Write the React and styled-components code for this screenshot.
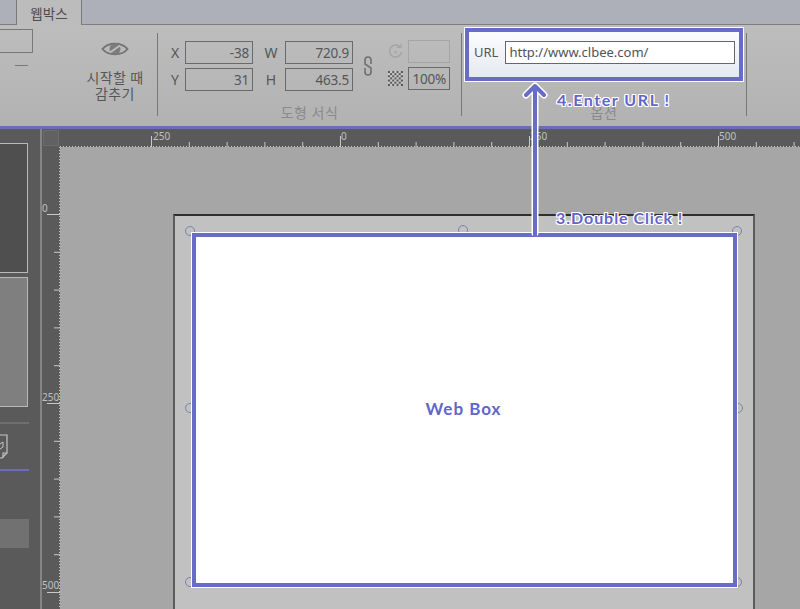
import React from "react";
import styled, { createGlobalStyle } from "styled-components";

const GlobalStyle = createGlobalStyle`
  html, body {
    margin: 0;
    padding: 0;
    background: #5a5a5a;
  }
  * {
    box-sizing: border-box;
  }
`;

const Screen = styled.div`
  position: relative;
  width: 800px;
  height: 609px;
  overflow: hidden;
  display: flex;
  flex-direction: column;
  font-family: "Noto Sans", "Noto Sans CJK KR", sans-serif;
  color: #565656;
`;

const TabBar = styled.div`
  height: 25px;
  flex: none;
  display: flex;
  padding-left: 16px;
  background: #adb0b8;
  border-bottom: 1px solid #7e7e80;
`;

const Tab = styled.div`
  width: 66px;
  height: 25px;
  display: flex;
  align-items: center;
  justify-content: center;
  font-size: 13.5px;
  color: #4c4c4c;
  background: #bcbcbd;
  border-left: 1px solid #77797d;
  border-right: 1px solid #77797d;
`;

const Ribbon = styled.div`
  height: 101px;
  flex: none;
  display: flex;
  background: linear-gradient(#bdbdbd, #b2b2b3);
`;

const Group = styled.div`
  width: ${(p) => p.$width}px;
  flex: none;
  display: flex;
  flex-direction: column;
  position: relative;
`;

const GroupBody = styled.div`
  flex: 1;
  display: flex;
`;

const Caption = styled.div`
  height: 18px;
  margin-bottom: 4px;
  text-align: center;
  font-size: 14px;
  line-height: 18px;
  letter-spacing: 0.5px;
  color: #8a8a8b;
`;

const Separator = styled.div`
  width: 1px;
  flex: none;
  margin: 8px 0 10px;
  background: #77787a;
`;

const StubColumn = styled.div`
  width: 33px;
  flex: none;
  display: flex;
  flex-direction: column;
  align-items: flex-end;
  padding-top: 4px;
`;

const StubBox = styled.div`
  width: 33px;
  height: 24px;
  border: 1px solid #77787a;
  border-left: none;
`;

const StubDash = styled.div`
  width: 13px;
  height: 1px;
  margin: 12px 5px 0 0;
  background: #77787a;
`;

const HideButton = styled.div`
  width: 70px;
  margin-left: 47px;
  padding-top: 14px;
  display: flex;
  flex-direction: column;
  align-items: center;
`;

const HideLabel = styled.div`
  margin-top: 11px;
  font-size: 14px;
  line-height: 16px;
  text-align: center;
  letter-spacing: 0.4px;
  white-space: nowrap;
`;

const FieldGrid = styled.div`
  margin: 16px 0 0 7px;
  display: grid;
  grid-template-columns: 20px 68px 32px 68px;
  grid-auto-rows: 23px;
  row-gap: 4px;
  align-items: center;
`;

const FieldLabel = styled.div`
  font-size: 14px;
  text-align: center;
  padding-left: ${(p) => (p.$wide ? 4 : 0)}px;
`;

const ValueBox = styled.div`
  width: ${(p) => (p.$fill ? "100%" : "auto")};
  height: 23px;
  display: flex;
  align-items: center;
  justify-content: flex-end;
  padding-right: 3px;
  font-size: 13.5px;
  letter-spacing: -0.2px;
  color: ${(p) => (p.$muted ? "#a5a5a6" : "#565656")};
  border: 1px solid ${(p) => (p.$muted ? "#a4a5a6" : "#686a6c")};
`;

const LinkIcon = styled.div`
  width: 14px;
  margin: 31px 0 0 8px;
`;

const ExtraColumn = styled.div`
  margin: 15px 0 0 11px;
  display: grid;
  grid-template-columns: 18px 42px;
  grid-auto-rows: 23px;
  column-gap: 4px;
  row-gap: 4px;
  align-items: center;
  justify-items: center;
`;

const Highlight = styled.div`
  width: 278px;
  height: 53px;
  margin: 3px 0 0 3px;
  display: flex;
  align-items: center;
  gap: 7px;
  padding: 0 0 5px 5px;
  background: linear-gradient(#fbfcfd, #e6e9f1);
  border: 4px solid #676cc8;
  outline: 1px solid #fff;
`;

const UrlLabel = styled.div`
  font-size: 13px;
  color: #555;
`;

const UrlInput = styled.div`
  width: 230px;
  height: 23px;
  display: flex;
  align-items: center;
  padding-left: 3px;
  font-size: 13px;
  color: #50525a;
  background: #fff;
  border: 1px solid #66676a;
`;

const AccentLine = styled.div`
  height: 3px;
  flex: none;
  background: #6a6eb6;
`;

const Workspace = styled.div`
  flex: 1;
  min-height: 0;
  display: flex;
  background: #5a5a5a;
`;

const SidePanel = styled.div`
  width: 42px;
  flex: none;
  display: flex;
  flex-direction: column;
  padding-top: 14px;
  border-right: 2px solid #858585;
`;

const Thumb = styled.div`
  width: 28px;
  height: 130px;
  margin-bottom: 4px;
  background: ${(p) => (p.$active ? "#7f7f7f" : "#4f4f4f")};
  border: 1px solid #b9b9b9;
  border-left: none;
`;

const PanelRule = styled.div`
  width: 29px;
  height: ${(p) => p.$size}px;
  margin-top: ${(p) => p.$gap}px;
  background: ${(p) => p.$color};
`;

const PanelIcon = styled.div`
  height: 26px;
  margin-top: 10px;
`;

const PanelBlock = styled.div`
  width: 29px;
  height: 29px;
  margin-top: 48px;
  background: #717171;
`;

const Stage = styled.div`
  flex: 1;
  min-width: 0;
  display: flex;
  flex-direction: column;
`;

const TopRuler = styled.div`
  height: 18px;
  flex: none;
  position: relative;
`;

const RulerCorner = styled.div`
  position: absolute;
  left: 1px;
  top: 1px;
  width: 16px;
  height: 16px;
  background: #616161;
  border: 1px solid #6c6c6c;
`;

const StageRow = styled.div`
  flex: 1;
  min-height: 0;
  display: flex;
`;

const SideRuler = styled.div`
  width: 18px;
  flex: none;
`;

const Canvas = styled.div`
  flex: 1;
  min-width: 0;
  padding: 67px 0 0 113px;
  background: #a6a6a6;
`;

const Page = styled.div`
  width: 582px;
  height: 420px;
  padding: 17px 0 0 17px;
  background: #c1c1c1;
  border: 2px solid #5c5c5c;
  border-top-color: #2f2f2f;
`;

const Selection = styled.div`
  position: relative;
  width: 545px;
  height: 354px;
`;

const Handle = styled.div`
  position: absolute;
  left: ${(p) => p.$x}%;
  top: ${(p) => p.$y}%;
  width: 10px;
  height: 10px;
  margin: -6px 0 0 -5px;
  border-radius: 50%;
  border: 1px solid #7d80b0;
  background: #c1c1c1;
`;

const WebBox = styled.div`
  position: relative;
  height: 100%;
  display: flex;
  align-items: center;
  justify-content: center;
  padding: 0 2px 3px 0;
  background: #fff;
  border: 4px solid #676cc8;
  outline: 1px solid #fff;
`;

const HandText = styled.div`
  font-family: "Lato", "Noto Sans", sans-serif;
  font-weight: 700;
  font-size: 17px;
  letter-spacing: 1px;
  color: #5f67c8;
  white-space: nowrap;
`;

const Callout = styled(HandText)`
  position: absolute;
  left: ${(p) => p.$x}px;
  top: ${(p) => p.$y}px;
  font-size: 16px;
  letter-spacing: ${(p) => p.$spacing}px;
  line-height: 20px;
  text-shadow: 1px 0 #fff, -1px 0 #fff, 0 1px #fff, 0 -1px #fff, 1px 1px #fff,
    -1px -1px #fff, 1px -1px #fff, -1px 1px #fff;
`;

const ArrowLayer = styled.svg`
  position: absolute;
  left: 515px;
  top: 78px;
`;

const range = (from, to, step) => {
  const out = [];
  for (let v = from; v <= to; v += step) out.push(v);
  return out;
};

const EyeIcon = () => (
  <svg width="28" height="20" viewBox="0 0 28 20">
    <path
      d="M1.5 10 C7 3 21 3 26.5 10 C21 17 7 17 1.5 10 Z"
      fill="none"
      stroke="#757575"
      strokeWidth="2"
    />
    <circle cx="14" cy="10" r="5.5" fill="#7c7c7c" />
    <path d="M9 13.5 L19 6.5" stroke="#bcbcbc" strokeWidth="2" />
  </svg>
);

const ChainIcon = () => (
  <svg width="14" height="20" viewBox="0 0 14 20">
    <path
      d="M10 8 V4 A3 3 0 0 0 4 4 V8 L10 12 V16 A3 3 0 0 1 4 16 V12"
      fill="none"
      stroke="#707070"
      strokeWidth="1.6"
    />
  </svg>
);

const RefreshIcon = () => (
  <svg width="15" height="15" viewBox="0 0 15 15">
    <path
      d="M12 3 A6 6 0 1 0 13.5 8"
      fill="none"
      stroke="#a4a4a5"
      strokeWidth="1.5"
    />
    <path d="M9 3.5 H13 V0" fill="none" stroke="#a4a4a5" strokeWidth="1.2" />
    <circle cx="7.5" cy="8" r="1.2" fill="#a4a4a5" />
  </svg>
);

const CheckerIcon = () => (
  <svg width="15" height="15" viewBox="0 0 14 14">
    {range(0, 6, 1).map((row) =>
      range(0, 6, 1).map((col) => (
        <rect
          key={`${row}-${col}`}
          x={col * 2}
          y={row * 2}
          width="2"
          height="2"
          fill={(row + col) % 2 ? "#c8c8c8" : "#5c5c5c"}
        />
      ))
    )}
  </svg>
);

const NoteIcon = () => (
  <svg width="9" height="26" viewBox="0 0 9 26">
    <path
      d="M0 1 H7 V19 L2 24 H0 M7 19 H3 V24"
      fill="none"
      stroke="#c4c4c4"
      strokeWidth="1.2"
    />
    <path d="M0 10 L3 8 V13 L0 15" fill="none" stroke="#c4c4c4" />
  </svg>
);

const HorizontalTicks = () => (
  <svg width="758" height="18" style={{ display: "block" }}>
    {range(0, 19, 1).map((i) => {
      const x = 109.5 + i * 37.8;
      const major = i % 5 === 0;
      return (
        <line
          key={i}
          x1={x}
          x2={x}
          y1={major ? 7 : 13}
          y2="18"
          stroke="#c8c8c8"
        />
      );
    })}
    <line
      x1="18"
      x2="758"
      y1="17.5"
      y2="17.5"
      stroke="#c8c8c8"
      strokeDasharray="1 2"
    />
    {[
      [111, "250"],
      [299, "0"],
      [488, "250"],
      [677, "500"],
    ].map(([x, label]) => (
      <text
        key={x}
        x={x}
        y="11"
        fontSize="10"
        fill="#c0c0c0"
        fontFamily="Noto Sans, sans-serif"
      >
        {label}
      </text>
    ))}
  </svg>
);

const VerticalTicks = () => (
  <svg width="18" height="462" style={{ display: "block" }}>
    {range(0, 11, 1).map((i) => {
      const y = 67.5 + i * 37.8;
      const major = i % 5 === 0;
      return (
        <line
          key={i}
          x1={major ? 5 : 12}
          x2="18"
          y1={y}
          y2={y}
          stroke="#c8c8c8"
        />
      );
    })}
    <line
      x1="17.5"
      x2="17.5"
      y1="0"
      y2="462"
      stroke="#c8c8c8"
      strokeDasharray="1 2"
    />
    {[
      [65, "0"],
      [254, "250"],
      [442, "500"],
    ].map(([y, label]) => (
      <text
        key={y}
        x="0"
        y={y}
        fontSize="10"
        fill="#c0c0c0"
        fontFamily="Noto Sans, sans-serif"
      >
        {label}
      </text>
    ))}
  </svg>
);

const handles = [
  [-0.3, -0.3],
  [49.8, -0.5],
  [100, -0.3],
  [-0.3, 49.8],
  [100.2, 49.8],
  [-0.3, 98.8],
  [49.8, 98.2],
  [100, 98.8],
];

const App = () => {
  return (
    <Screen>
      <GlobalStyle />
      <TabBar>
        <Tab>웹박스</Tab>
      </TabBar>
      <Ribbon>
        <Group $width={157}>
          <GroupBody>
            <StubColumn>
              <StubBox />
              <StubDash />
            </StubColumn>
            <HideButton>
              <EyeIcon />
              <HideLabel>
                시작할 때
                <br />
                감추기
              </HideLabel>
            </HideButton>
          </GroupBody>
        </Group>
        <Separator />
        <Group $width={303}>
          <GroupBody>
            <FieldGrid>
              <FieldLabel>X</FieldLabel>
              <ValueBox>-38</ValueBox>
              <FieldLabel $wide>W</FieldLabel>
              <ValueBox>720.9</ValueBox>
              <FieldLabel>Y</FieldLabel>
              <ValueBox>31</ValueBox>
              <FieldLabel $wide>H</FieldLabel>
              <ValueBox>463.5</ValueBox>
            </FieldGrid>
            <LinkIcon>
              <ChainIcon />
            </LinkIcon>
            <ExtraColumn>
              <RefreshIcon />
              <ValueBox $muted $fill />
              <CheckerIcon />
              <ValueBox $fill>100%</ValueBox>
            </ExtraColumn>
          </GroupBody>
          <Caption>도형 서식</Caption>
        </Group>
        <Separator />
        <Group $width={284}>
          <GroupBody>
            <Highlight>
              <UrlLabel>URL</UrlLabel>
              <UrlInput>http://www.clbee.com/</UrlInput>
            </Highlight>
          </GroupBody>
          <Caption>옵션</Caption>
        </Group>
        <Separator />
      </Ribbon>
      <AccentLine />
      <Workspace>
        <SidePanel>
          <Thumb />
          <Thumb $active />
          <PanelRule $size={2} $gap={11} $color="#6f6f6f" />
          <PanelIcon>
            <NoteIcon />
          </PanelIcon>
          <PanelRule $size={2} $gap={9} $color="#6a6eb6" />
          <PanelBlock />
        </SidePanel>
        <Stage>
          <TopRuler>
            <HorizontalTicks />
            <RulerCorner />
          </TopRuler>
          <StageRow>
            <SideRuler>
              <VerticalTicks />
            </SideRuler>
            <Canvas>
              <Page>
                <Selection>
                  {handles.map(([x, y]) => (
                    <Handle key={`${x}-${y}`} $x={x} $y={y} />
                  ))}
                  <WebBox>
                    <HandText>Web Box</HandText>
                  </WebBox>
                </Selection>
              </Page>
            </Canvas>
          </StageRow>
        </Stage>
      </Workspace>
      <ArrowLayer width="40" height="158" viewBox="0 0 40 158">
        <path
          d="M20 155 V8 M11 17 L20 8 L29 17"
          fill="none"
          stroke="#fff"
          strokeWidth="7"
          strokeLinejoin="round"
          strokeLinecap="round"
        />
        <path
          d="M20 158 V8 M11 17 L20 8 L29 17"
          fill="none"
          stroke="#676cc8"
          strokeWidth="4"
          strokeLinejoin="round"
          strokeLinecap="round"
        />
      </ArrowLayer>
      <Callout $x={557} $y={90} $spacing={1.55}>
        4.Enter URL !
      </Callout>
      <Callout $x={556} $y={208} $spacing={0.95}>
        3.Double Click !
      </Callout>
    </Screen>
  );
};

export default App;
